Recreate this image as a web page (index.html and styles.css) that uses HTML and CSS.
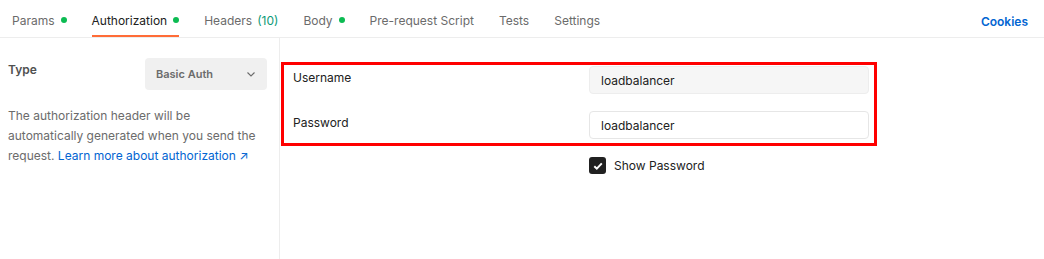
FILE: index.html
```html
<!DOCTYPE html>
<html lang="en">
  <head>
    <meta charset="UTF-8">
    <title>Authorization</title>
    <link rel="stylesheet" href="styles.css">
  </head>
  <body>
    <div class="tabs">
      <a class="tab">Params <span class="dot"></span></a>
      <a class="tab active">Authorization <span class="dot"></span></a>
      <a class="tab">Headers <span class="count">(10)</span></a>
      <a class="tab">Body <span class="dot"></span></a>
      <a class="tab">Pre-request Script</a>
      <a class="tab">Tests</a>
      <a class="tab">Settings</a>
      <a class="cookies">Cookies</a>
    </div>

    <div class="main">
      <div class="side">
        <div class="type-row">
          <span class="type-label">Type</span>
          <div class="select">
            <span>Basic Auth</span>
            <svg width="12" height="12" viewBox="0 0 12 12"><path d="M2.5 4.5 6 8l3.5-3.5" fill="none" stroke="#6b6b6b" stroke-width="1.1"/></svg>
          </div>
        </div>
        <p class="desc">The authorization header will be automatically generated when you send the request. <a class="link">Learn more about authorization &#x2197;</a></p>
      </div>

      <div class="content">
        <div class="fields">
          <label class="label">Username</label>
          <div class="input filled">loadbalancer</div>
          <label class="label">Password</label>
          <div class="input">loadbalancer</div>
        </div>
        <div class="options">
          <div class="check">
            <span class="box"><svg width="12" height="12" viewBox="0 0 12 12"><path d="M2.3 6.2 4.8 8.6 9.8 3.4" fill="none" stroke="#fff" stroke-width="2"/></svg></span>
            Show Password
          </div>
        </div>
      </div>
    </div>
  </body>
</html>
```

FILE: styles.css
```css
body { margin: 0; background: #fff; color: #212121; font-family: "Inter", "Noto Sans", sans-serif; font-size: 12px; height: 100vh; display: flex; flex-direction: column }

.tabs { display: flex; height: 37px; padding: 0 16px 0 12px; border-bottom: 1px solid #ededed; gap: 25px }
.tab { display: flex; align-items: center; gap: 6px; padding-top: 5px; border-bottom: 2px solid transparent; color: #6b6b6b; box-sizing: border-box }
.tab.active { color: #212121; border-bottom-color: #ff6c37 }
.dot { width: 6px; height: 6px; border-radius: 50%; background: #0cbb52 }
.count { color: #0c9a78; margin-left: -1px }
.cookies { margin-left: auto; display: flex; align-items: center; padding-top: 5px; color: #0265d2; font-weight: 600 }

.main { flex: 1; display: flex }
.side { width: 280px; box-sizing: border-box; padding: 20px 12px 0 8px; border-right: 1px solid #ededed }
.type-row { display: flex; justify-content: space-between; align-items: flex-start }
.type-label { font-weight: 600; color: #505050; margin-top: 4px }
.select { width: 122px; height: 32px; box-sizing: border-box; padding: 0 10px 0 11px; background: #f0f0f0; border-radius: 4px; display: flex; align-items: center; justify-content: space-between; font-size: 11px; font-weight: 600; color: #6b6b6b }
.desc { margin: 16px 0 0; line-height: 20px; color: #6b6b6b }
.link { color: #0265d2 }

.content { padding-top: 24px; margin-left: 1px }
.fields { width: 596px; box-sizing: border-box; border: 3px solid #f00; padding: 1px 5px 4px 9px; display: grid; grid-template-columns: 1fr 280px; row-gap: 17px }
.label { line-height: 20px; padding-top: 2px }
.input { height: 28px; box-sizing: border-box; border: 1px solid #e6e6e6; border-radius: 4px; padding: 0 11px; display: flex; align-items: center; color: #212121 }
.input.filled { background: #f6f6f6; border-color: #ededed }

.options { width: 596px; box-sizing: border-box; padding: 10px 8px 0 12px; display: grid; grid-template-columns: 1fr 280px }
.check { grid-column: 2; display: flex; align-items: center; gap: 8px; padding-top: 1px }
.box { width: 17px; height: 17px; border-radius: 3px; background: #212121; display: flex; align-items: center; justify-content: center }
```
